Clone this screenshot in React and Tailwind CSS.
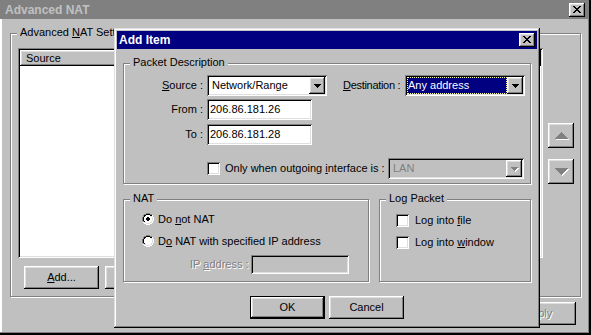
import React from "react";

const F = "font-['Liberation_Sans',Arial,sans-serif]";
const RAISED =
  "shadow-[inset_-1px_-1px_0_#000,inset_1px_1px_0_#fff,inset_-2px_-2px_0_#808080,inset_2px_2px_0_#dfdfdf]";
const WIN =
  "shadow-[inset_-1px_-1px_0_#000,inset_1px_1px_0_#dfdfdf,inset_-2px_-2px_0_#808080,inset_2px_2px_0_#fff]";
const SUNKEN =
  "shadow-[inset_1px_1px_0_#808080,inset_-1px_-1px_0_#fff,inset_2px_2px_0_#000,inset_-2px_-2px_0_#dfdfdf]";
const ETCHED = "border border-[#808080] shadow-[inset_1px_1px_0_#fff,1px_1px_0_#fff]";
const DEFBTN =
  "shadow-[inset_0_0_0_1px_#000,inset_-2px_-2px_0_#000,inset_2px_2px_0_#fff,inset_-3px_-3px_0_#808080,inset_3px_3px_0_#dfdfdf]";
const DIS = "text-[#808080] [text-shadow:1px_1px_0_#fff]";

function Pix({ rows, colors, className = "" }) {
  const h = rows.length;
  const w = rows[0].length;
  const rects = [];
  rows.forEach((r, y) => {
    for (let x = 0; x < r.length; x++) {
      const c = colors[r[x]];
      if (c) rects.push(<rect key={x + "-" + y} x={x} y={y} width="1" height="1" fill={c} />);
    }
  });
  return (
    <svg
      width={w}
      height={h}
      viewBox={`0 0 ${w} ${h}`}
      shapeRendering="crispEdges"
      className={"block shrink-0 " + className}
    >
      {rects}
    </svg>
  );
}

const XROWS = ["KK....KK", ".KK..KK.", "..KKKK..", "...KK...", "..KKKK..", ".KK..KK.", "KK....KK"];
const ARROW = ["KKKKKKK", ".KKKKK.", "..KKK..", "...K..."];
const ARROW_DIS = ["GGGGGGG.", ".GGGGGWW", "..GGGWW.", "...GWW..", "....W..."];

function triangle(up) {
  const W = 14;
  const H = 8;
  const g = Array.from({ length: H }, () => Array(W).fill("."));
  const paint = (dx, dy, ch) => {
    for (let i = 0; i < 7; i++) {
      const a = up ? 6 - i : i;
      const b = up ? 6 + i : 12 - i;
      for (let x = a; x <= b; x++) {
        const yy = i + dy;
        const xx = x + dx;
        if (ch === "G" || g[yy][xx] === ".") g[yy][xx] = ch;
      }
    }
  };
  paint(1, 1, "W");
  paint(0, 0, "G");
  return g.map((r) => r.join(""));
}
const UPTRI = triangle(true);
const DOWNTRI = triangle(false);

const RADIO_BASE = [
  "....GGGG....",
  "..GGKKKKGG..",
  ".GKKwwwwKKW.",
  ".GKwwwwwwLW.",
  "GKwwwwwwwwLW",
  "GKwwwwwwwwLW",
  "GKwwwwwwwwLW",
  "GKwwwwwwwwLW",
  ".GKwwwwwwLW.",
  ".WLLwwwwLLW.",
  "..WWLLLLWW..",
  "....WWWW....",
];
const RADIO_ON = [
  "....GGGG....",
  "..GGKKKKGG..",
  ".GKKwwwwKKW.",
  ".GKwwwwwwLW.",
  "GKwwwDDwwwLW",
  "GKwwDDDDwwLW",
  "GKwwDDDDwwLW",
  "GKwwwDDwwwLW",
  ".GKwwwwwwLW.",
  ".WLLwwwwLLW.",
  "..WWLLLLWW..",
  "....WWWW....",
];
const RC = { G: "#808080", K: "#000", W: "#fff", L: "#dfdfdf", w: "#fff", D: "#000" };

function Radio({ on }) {
  return <Pix rows={on ? RADIO_ON : RADIO_BASE} colors={RC} />;
}

function Check() {
  return <div className={`h-[13px] w-[13px] shrink-0 bg-white ${SUNKEN}`} />;
}

function CloseBtn() {
  return (
    <div className={`flex h-[14px] w-[16px] shrink-0 items-center justify-center bg-[#c0c0c0] ${RAISED}`}>
      <Pix rows={XROWS} colors={{ K: "#000" }} className="-mt-[1px]" />
    </div>
  );
}

function GroupLabel({ children }) {
  return (
    <span className="absolute -top-[8px] left-[6px] bg-[#c0c0c0] px-[3px] leading-[13px] whitespace-nowrap">
      {children}
    </span>
  );
}

function Combo({ className, text, selected, disabled }) {
  return (
    <div
      className={`flex h-[21px] shrink-0 p-[2px] ${SUNKEN} ${disabled ? "bg-[#c0c0c0]" : "bg-white"} ${className}`}
    >
      {selected ? (
        <div className="flex min-w-0 flex-1 items-center bg-[#000080] pl-[1px] text-white outline-1 -outline-offset-1 outline-dotted outline-[#ffffa0]">
          {text}
        </div>
      ) : (
        <div className={`flex min-w-0 flex-1 items-center pl-[3px] ${disabled ? "text-[#808080]" : ""}`}>
          {text}
        </div>
      )}
      <div className={`flex w-[16px] shrink-0 items-center justify-center bg-[#c0c0c0] ${RAISED}`}>
        {disabled ? (
          <Pix rows={ARROW_DIS} colors={{ G: "#808080", W: "#fff" }} className="ml-[1px] mt-[1px]" />
        ) : (
          <Pix rows={ARROW} colors={{ K: "#000" }} />
        )}
      </div>
    </div>
  );
}

function TextBox({ children }) {
  return (
    <div className={`flex h-[21px] w-[105px] shrink-0 items-center bg-white pl-[3px] ${SUNKEN}`}>
      {children}
    </div>
  );
}

function Button({ children, def, className = "" }) {
  return (
    <div
      className={`flex h-[23px] w-[75px] shrink-0 items-center justify-center bg-[#c0c0c0] ${def ? DEFBTN : RAISED} ${className}`}
    >
      {children}
    </div>
  );
}

export default function App() {
  return (
    <div
      className={`${F} relative h-[335px] w-[591px] overflow-hidden bg-[#c0c0c0] text-[11px] leading-[13px] text-black shadow-[inset_-2px_-2px_0_#000,inset_-3px_-3px_0_#808080,inset_2px_0_0_#fff]`}
    >
      {/* Outer window title */}
      <div className="flex h-[19px] w-[588px] items-center justify-between bg-[#808080] pl-[5px] pr-[3px]">
        <span className="text-[12px] font-bold leading-[14px] text-[#c0c0c0]">Advanced NAT</span>
        <CloseBtn />
      </div>

      {/* Outer group */}
      <div className={`relative ml-[10px] mt-[14px] h-[264px] w-[571px] ${ETCHED}`}>
        <GroupLabel>
          Advanced <u>N</u>AT Settings
        </GroupLabel>
        <div className="ml-[7px] mt-[14px] flex">
          <div className={`h-[210px] w-[525px] shrink-0 bg-white p-[2px] ${SUNKEN}`}>
            <div className="flex h-[16px]">
              <div className={`flex w-[150px] items-center bg-[#c0c0c0] pl-[6px] ${RAISED}`}>Source</div>
              <div className={`flex flex-1 bg-[#c0c0c0] ${RAISED}`} />
            </div>
          </div>
          <div className="ml-[5px] flex flex-col gap-[11px] pt-[75px]">
            <div className={`flex h-[25px] w-[26px] items-center justify-center bg-[#c0c0c0] ${RAISED}`}>
              <Pix rows={UPTRI} colors={{ G: "#808080", W: "#fff" }} className="ml-[1px]" />
            </div>
            <div className={`flex h-[25px] w-[26px] items-center justify-center bg-[#c0c0c0] ${RAISED}`}>
              <Pix rows={DOWNTRI} colors={{ G: "#808080", W: "#fff" }} className="ml-[1px]" />
            </div>
          </div>
        </div>
        <div className="ml-[13px] mt-[8px] flex gap-[6px]">
          <Button>
            <span>
              <u>A</u>dd...
            </span>
          </Button>
          <Button />
        </div>
      </div>

      {/* Outer bottom button (partly hidden by the dialog) */}
      <div className="ml-[501px] mt-[5px] flex">
        <Button>
          <span className={DIS}>Apply</span>
        </Button>
      </div>

      {/* Add Item dialog (floating window) */}
      <div className={`absolute left-[114px] top-[28px] flex h-[300px] w-[426px] flex-col bg-[#c0c0c0] p-[3px] ${WIN}`}>
        <div className="flex h-[18px] shrink-0 items-center justify-between bg-[#000080] pl-[2px] pr-[2px]">
          <span className="text-[12px] font-bold leading-[14px] text-white">Add Item</span>
          <CloseBtn />
        </div>

        {/* Packet Description */}
        <div className={`relative ml-[6px] mt-[14px] h-[121px] w-[408px] shrink-0 ${ETCHED}`}>
          <GroupLabel>Packet Description</GroupLabel>
          <div className="mt-[11px] flex items-center">
            <div className="w-[79px] text-right whitespace-nowrap">
              <u>S</u>ource :
            </div>
            <Combo className="ml-[4px] w-[120px]" text="Network/Range" />
            <div className="ml-[16px] w-[58px] whitespace-nowrap tracking-[-0.3px]">
              <u>D</u>estination :
            </div>
            <Combo className="ml-[4px] w-[120px]" text="Any address" selected />
          </div>
          <div className="mt-[3px] flex items-center">
            <div className="w-[79px] text-right">From :</div>
            <div className="ml-[4px]">
              <TextBox>206.86.181.26</TextBox>
            </div>
          </div>
          <div className="mt-[4px] flex items-center">
            <div className="w-[79px] text-right">To :</div>
            <div className="ml-[4px]">
              <TextBox>206.86.181.28</TextBox>
            </div>
          </div>
          <div className="mt-[13px] flex items-center">
            <div className="ml-[83px]">
              <Check />
            </div>
            <div className="ml-[5px] w-[163px] whitespace-nowrap">
              Only when outgoing <u>i</u>nterface is :
            </div>
            <Combo className="w-[136px]" text="LAN" disabled />
          </div>
        </div>

        {/* NAT + Log Packet */}
        <div className="ml-[6px] mt-[15px] flex shrink-0">
          <div className={`relative h-[83px] w-[246px] ${ETCHED}`}>
            <GroupLabel>NAT</GroupLabel>
            <div className="ml-[18px] mt-[13px] flex h-[12px] items-center">
              <Radio on />
              <span className="ml-[4px] whitespace-nowrap">
                Do <u>n</u>ot NAT
              </span>
            </div>
            <div className="ml-[18px] mt-[10px] flex h-[12px] items-center">
              <Radio />
              <span className="ml-[4px] whitespace-nowrap">
                D<u>o</u> NAT with specified IP address
              </span>
            </div>
            <div className="ml-[66px] mt-[8px] flex items-center">
              <span className={`w-[61px] whitespace-nowrap ${DIS}`}>
                IP <u>a</u>ddress :
              </span>
              <div className={`h-[19px] w-[98px] bg-[#c0c0c0] ${SUNKEN}`} />
            </div>
          </div>
          <div className={`relative ml-[10px] h-[83px] w-[152px] ${ETCHED}`}>
            <GroupLabel>Log Packet</GroupLabel>
            <div className="ml-[16px] mt-[14px] flex h-[13px] items-center">
              <Check />
              <span className="ml-[6px] whitespace-nowrap">
                Log into <u>f</u>ile
              </span>
            </div>
            <div className="ml-[16px] mt-[9px] flex h-[13px] items-center">
              <Check />
              <span className="ml-[6px] whitespace-nowrap">
                Log into <u>w</u>indow
              </span>
            </div>
          </div>
        </div>

        {/* Dialog buttons */}
        <div className="mt-[14px] flex justify-center gap-[4px]">
          <Button def>OK</Button>
          <Button>Cancel</Button>
        </div>
      </div>
    </div>
  );
}
